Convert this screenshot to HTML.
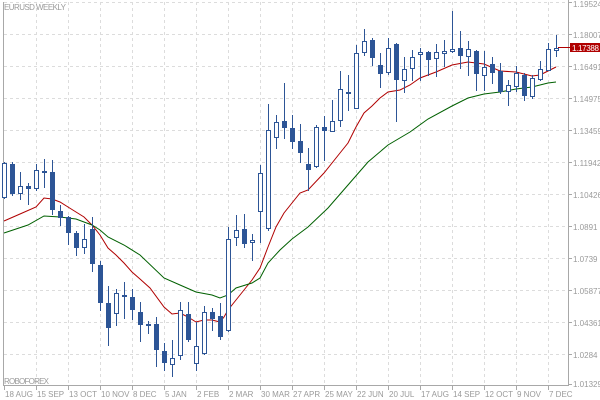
<!DOCTYPE html><html><head><style>body{margin:0;background:#fff}svg{display:block}text{font-family:"Liberation Sans",sans-serif;font-size:8px;fill:#9a9a9a}</style></head><body>
<svg width="600" height="400" xmlns="http://www.w3.org/2000/svg" shape-rendering="crispEdges">
<g stroke="#dcdcdc" stroke-dasharray="3,3" stroke-width="1">
<path d="M36.5 2V385M68.5 2V385M100.5 2V385M132.5 2V385M164.5 2V385M196.5 2V385M228.5 2V385M260.5 2V385M292.5 2V385M324.5 2V385M356.5 2V385M388.5 2V385M420.5 2V385M452.5 2V385M484.5 2V385M516.5 2V385M548.5 2V385"/>
<path d="M4 2.5H568M4 34.5H568M4 66.5H568M4 98.5H568M4 130.5H568M4 162.5H568M4 194.5H568M4 226.5H568M4 258.5H568M4 290.5H568M4 322.5H568M4 354.5H568"/>
</g>
<g stroke="#a8a8a8" fill="none"><path d="M3.5 2V385.5H568.5V0"/>
<path d="M4.5 386V390M36.5 386V390M68.5 386V390M100.5 386V390M132.5 386V390M164.5 386V390M196.5 386V390M228.5 386V390M260.5 386V390M292.5 386V390M324.5 386V390M356.5 386V390M388.5 386V390M420.5 386V390M452.5 386V390M484.5 386V390M516.5 386V390M548.5 386V390"/>
<path d="M569 2.5H572M569 34.5H572M569 66.5H572M569 98.5H572M569 130.5H572M569 162.5H572M569 194.5H572M569 226.5H572M569 258.5H572M569 290.5H572M569 322.5H572M569 354.5H572M569 384.5H572"/></g>
<polyline fill="none" stroke="#b00000" stroke-width="1" shape-rendering="auto" points="4,221 20,214 36,207 44,198 52,199 60,202 68,207 76,212 84,217 92,225 100,235 108,248 116,255 124,263 132,272 140,279 150,288 164,307 172,314 180,313 188,317 196,322 204,320 212,320 220,322 224,317 228,310 236,300 244,290 252,280 260,268 268,247 276,227 284,213 300,193 308,190 324,173 340,153 348,143 356,127 364,113 372,106 380,98 388,92 400,90 410,85 420,78 436,72 452,65 468,62 484,64 500,71 516,72 532,76 540,75 548,71 556,67"/>
<polyline fill="none" stroke="#006000" stroke-width="1" shape-rendering="auto" points="4,233 28,225 44,216 60,217 76,219 92,225 100,230 108,237 124,245 140,255 164,278 180,285 196,292 212,295 220,298 228,295 236,288 252,283 260,278 268,263 280,250 292,239 308,227 328,208 348,185 368,162 388,145 410,132 428,119 452,106 468,98 484,94 500,92 516,89 532,87 548,83 556,82"/>
<g stroke="#2d5596" fill="#2d5596">
<path d="M4.5 162V199M12.5 162V196M20.5 172V200M28.5 183V205M36.5 164V191M44.5 159V188M52.5 160V215M60.5 205V226M68.5 216V245M76.5 231V256M84.5 224V254M92.5 217V272M100.5 261V311M108.5 286V346M116.5 289V326M124.5 282V319M132.5 289V320M140.5 302V342M148.5 321V334M156.5 317V367M164.5 343V371M172.5 340V377M180.5 302V360M188.5 302V342M196.5 322V371M204.5 306V355M212.5 308V331M220.5 303V340M228.5 227V332M236.5 215V246M244.5 214V248M252.5 234V261M260.5 165V243M268.5 104V231M276.5 115V149M284.5 83V139M292.5 115V149M300.5 124V163M308.5 148V191M316.5 125V168M324.5 116V161M332.5 100V132M340.5 71V127M348.5 75V111M356.5 45V109M364.5 29V56M372.5 38V66M380.5 53V88M388.5 38V75M396.5 43V122M404.5 57V93M412.5 50V81M420.5 48V81M428.5 51V76M436.5 44V77M444.5 40V67M452.5 11V53M460.5 31V69M468.5 41V76M476.5 50V91M484.5 51V91M492.5 57V84M500.5 63V94M508.5 80V106M516.5 66V92M524.5 73V101M532.5 75V99M540.5 61V81M548.5 43V71M556.5 35V57"/>
<g stroke="none">
<rect x="10" y="164" width="5" height="30"/><rect x="26" y="186" width="5" height="3"/><rect x="42" y="171" width="5" height="2"/><rect x="50" y="172" width="5" height="38"/><rect x="58" y="211" width="5" height="7"/><rect x="66" y="217" width="5" height="16"/><rect x="74" y="233" width="5" height="15"/><rect x="90" y="229" width="5" height="35"/><rect x="98" y="265" width="5" height="38"/><rect x="106" y="303" width="5" height="25"/><rect x="122" y="295" width="5" height="2"/><rect x="130" y="297" width="5" height="13"/><rect x="138" y="312" width="5" height="13"/><rect x="146" y="324" width="5" height="2"/><rect x="154" y="324" width="5" height="26"/><rect x="162" y="351" width="5" height="12"/><rect x="186" y="314" width="5" height="26"/><rect x="210" y="312" width="5" height="7"/><rect x="218" y="316" width="5" height="21"/><rect x="242" y="229" width="5" height="15"/><rect x="282" y="121" width="5" height="7"/><rect x="290" y="128" width="5" height="14"/><rect x="298" y="141" width="5" height="12"/><rect x="306" y="164" width="5" height="6"/><rect x="322" y="127" width="5" height="4"/><rect x="346" y="92" width="5" height="2"/><rect x="370" y="40" width="5" height="18"/><rect x="378" y="65" width="5" height="9"/><rect x="394" y="44" width="5" height="36"/><rect x="426" y="52" width="5" height="8"/><rect x="458" y="48" width="5" height="8"/><rect x="474" y="51" width="5" height="23"/><rect x="490" y="64" width="5" height="9"/><rect x="498" y="71" width="5" height="21"/><rect x="522" y="75" width="5" height="21"/>
</g>
<g fill="#fff">
<rect x="2.5" y="163.5" width="4" height="34"/><rect x="18.5" y="186.5" width="4" height="7"/><rect x="34.5" y="170.5" width="4" height="18"/><rect x="82.5" y="239.5" width="4" height="8"/><rect x="114.5" y="293.5" width="4" height="20"/><rect x="170.5" y="358.5" width="4" height="6"/><rect x="178.5" y="310.5" width="4" height="45"/><rect x="194.5" y="346.5" width="4" height="17"/><rect x="202.5" y="312.5" width="4" height="41"/><rect x="226.5" y="239.5" width="4" height="91"/><rect x="234.5" y="230.5" width="4" height="7"/><rect x="250.5" y="240.5" width="4" height="2"/><rect x="258.5" y="173.5" width="4" height="38"/><rect x="266.5" y="130.5" width="4" height="98"/><rect x="274.5" y="122.5" width="4" height="15"/><rect x="314.5" y="127.5" width="4" height="39"/><rect x="330.5" y="121.5" width="4" height="10"/><rect x="338.5" y="89.5" width="4" height="31"/><rect x="354.5" y="53.5" width="4" height="55"/><rect x="362.5" y="41.5" width="4" height="11"/><rect x="386.5" y="48.5" width="4" height="24"/><rect x="402.5" y="69.5" width="4" height="11"/><rect x="410.5" y="57.5" width="4" height="11"/><rect x="418.5" y="52.5" width="4" height="2"/><rect x="434.5" y="52.5" width="4" height="6"/><rect x="442.5" y="51.5" width="4" height="2"/><rect x="450.5" y="49.5" width="4" height="2"/><rect x="466.5" y="49.5" width="4" height="7"/><rect x="482.5" y="67.5" width="4" height="8"/><rect x="506.5" y="85.5" width="4" height="6"/><rect x="514.5" y="73.5" width="4" height="13"/><rect x="530.5" y="78.5" width="4" height="18"/><rect x="538.5" y="69.5" width="4" height="10"/><rect x="546.5" y="49.5" width="4" height="21"/><rect x="554.5" y="48.5" width="4" height="2"/>
</g></g>
<path d="M558 47.5H570" stroke="#b00000"/>
<rect x="570" y="43" width="30" height="9" fill="#b00000"/>
<text x="572" y="51" textLength="27" style="fill:#fff">1.17388</text>
<text x="4" y="10" textLength="62">EURUSD WEEKLY</text>
<text x="4" y="384" textLength="45">ROBOFOREX</text>
<g><text x="573" y="7">1.19524</text><text x="573" y="38">1.18007</text><text x="573" y="70">1.16491</text><text x="573" y="102">1.14975</text><text x="573" y="134">1.13459</text><text x="573" y="166">1.11942</text><text x="573" y="198">1.10426</text><text x="573" y="230">1.0891</text><text x="573" y="262">1.0739</text><text x="573" y="294">1.05877</text><text x="573" y="326">1.04361</text><text x="573" y="358">1.0284</text><text x="573" y="387">1.01329</text></g>
<g><text x="5" y="397">18 AUG</text><text x="37" y="397">15 SEP</text><text x="69" y="397">13 OCT</text><text x="101" y="397">10 NOV</text><text x="133" y="397">8 DEC</text><text x="165" y="397">5 JAN</text><text x="197" y="397">2 FEB</text><text x="229" y="397">2 MAR</text><text x="261" y="397">30 MAR</text><text x="293" y="397">27 APR</text><text x="325" y="397">25 MAY</text><text x="357" y="397">22 JUN</text><text x="389" y="397">20 JUL</text><text x="421" y="397">17 AUG</text><text x="453" y="397">14 SEP</text><text x="485" y="397">12 OCT</text><text x="517" y="397">9 NOV</text><text x="549" y="397">7 DEC</text></g>
</svg></body></html>
